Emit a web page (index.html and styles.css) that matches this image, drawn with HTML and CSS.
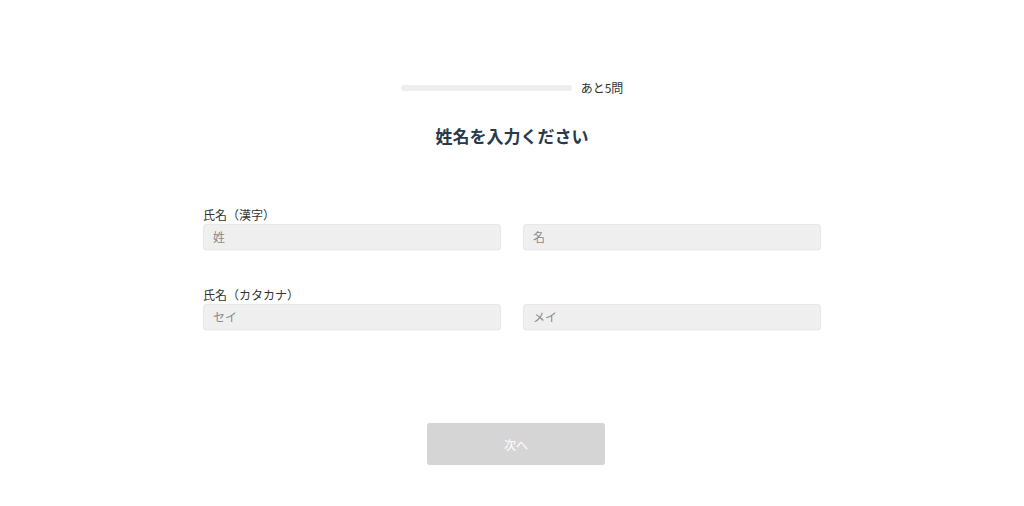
FILE: index.html
```html
<!DOCTYPE html>
<html>
    <head>
        <title>姓名を入力ください</title>
        <meta charset="UTF-8">
        <meta name="viewport" content="width=device-width, initial-scale=1.0">
        <link rel="stylesheet" href="styles.css">
    </head>
    <body>
        <div class="page">
            <div class="progress">
                <div class="bar"><div class="fill"></div></div>
                <span class="remain">あと5問</span>
            </div>
            <h1 class="title">姓名を入力ください</h1>
            <form class="form" action="#" method="post">
                <!-- kanji name -->
                <div class="field">
                    <label class="label">氏名（漢字）</label>
                    <div class="pair">
                        <input class="input" type="text" name="sei" placeholder="姓">
                        <input class="input" type="text" name="mei" placeholder="名">
                    </div>
                </div>
                <!-- katakana name -->
                <div class="field">
                    <label class="label">氏名（カタカナ）</label>
                    <div class="pair">
                        <input class="input" type="text" name="sei_kana" placeholder="セイ">
                        <input class="input" type="text" name="mei_kana" placeholder="メイ">
                    </div>
                </div>
                <div class="actions">
                    <button class="btn" type="submit" disabled>次へ</button>
                </div>
            </form>
        </div>
    </body>
</html>
```

FILE: styles.css
```css
body {
    margin: 0;
    background: #fff;
    color: #333;
    font-family: "Noto Sans CJK JP", "Noto Sans", sans-serif;
}
.page {
    width: 618px;
    margin: 0 auto;
    padding-top: 78px;
}
.progress {
    display: flex;
    align-items: center;
    justify-content: center;
    gap: 9px;
    height: 20px;
}
.bar {
    width: 171px;
    height: 6px;
    border-radius: 3px;
    background: #eceef0;
}
.fill {
    width: 0;
    height: 100%;
}
.remain {
    font-size: 12px;
    line-height: 20px;
    color: #333;
}
.title {
    margin: 25px 0 0;
    text-align: center;
    font-size: 17px;
    line-height: 26px;
    font-weight: bold;
    color: #283a4a;
}
.form {
    margin-top: 58px;
}
.field + .field {
    margin-top: 37px;
}
.label {
    display: block;
    font-size: 12px;
    line-height: 16px;
    color: #333;
}
.pair {
    display: flex;
    gap: 22px;
    margin-top: 1px;
}
.input {
    flex: 1;
    min-width: 0;
    height: 26px;
    box-sizing: border-box;
    padding: 0 9px 1px;
    border: 1px solid #e8e8e8;
    border-radius: 3px;
    background: #efefef;
    box-shadow: 0 1px 1px rgba(0, 0, 0, 0.04);
    font-family: inherit;
    font-size: 12px;
    color: #333;
}
.input::placeholder {
    color: #8a8a8a;
}
.actions {
    display: flex;
    justify-content: center;
    padding-left: 8px;
    margin-top: 93px;
}
.btn {
    width: 178px;
    height: 42px;
    border: none;
    border-radius: 3px;
    background: #d5d5d5;
    color: #fff;
    font-family: inherit;
    font-size: 12px;
}
```
